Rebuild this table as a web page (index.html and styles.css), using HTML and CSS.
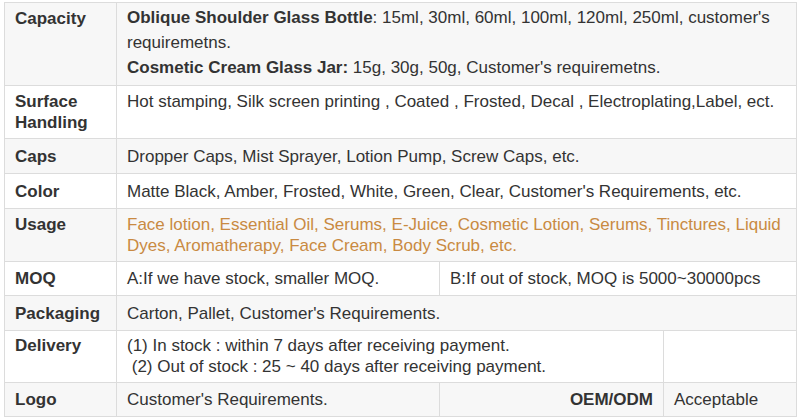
FILE: index.html
```html
<!DOCTYPE html>
<html>
<head>
<meta charset="utf-8">
<link rel="stylesheet" href="styles.css">
</head>
<body>
<table class="spec">
  <colgroup>
    <col class="c-label">
    <col class="c-a">
    <col class="c-b">
    <col class="c-c">
  </colgroup>
  <tr class="alt">
    <th class="label">Capacity</th>
    <td colspan="3" class="cap"><b>Oblique Shoulder Glass Bottle</b><span>: 15ml, 30ml, 60ml, 100ml, 120ml, 250ml, customer's requiremetns.</span><br><b>Cosmetic Cream Glass Jar:</b> <span>15g, 30g, 50g, Customer's requiremetns.</span></td>
  </tr>
  <tr>
    <th class="label">Surface Handling</th>
    <td colspan="3">Hot stamping, Silk screen printing , Coated , Frosted, Decal , Electroplating,Label, ect.</td>
  </tr>
  <tr class="alt single">
    <th class="label">Caps</th>
    <td colspan="3">Dropper Caps, Mist Sprayer, Lotion Pump, Screw Caps, etc.</td>
  </tr>
  <tr class="single">
    <th class="label">Color</th>
    <td colspan="3">Matte Black, Amber, Frosted, White, Green, Clear, Customer's Requirements, etc.</td>
  </tr>
  <tr class="alt">
    <th class="label">Usage</th>
    <td colspan="3" class="usage">Face lotion, Essential Oil, Serums, E-Juice, Cosmetic Lotion, Serums, Tinctures, Liquid Dyes, Aromatherapy, Face Cream, Body Scrub, etc.</td>
  </tr>
  <tr class="single short">
    <th class="label">MOQ</th>
    <td>A:If we have stock, smaller MOQ.</td>
    <td colspan="2">B:If out of stock, MOQ is 5000~30000pcs</td>
  </tr>
  <tr class="alt single">
    <th class="label">Packaging</th>
    <td colspan="3">Carton, Pallet, Customer's Requirements.</td>
  </tr>
  <tr class="delivery">
    <th class="label">Delivery</th>
    <td colspan="2">(1) In stock : within 7 days after receiving payment.<br>&nbsp;(2) Out of stock : 25 ~ 40 days after receiving payment.</td>
    <td></td>
  </tr>
  <tr class="alt single short">
    <th class="label">Logo</th>
    <td>Customer's Requirements.</td>
    <th class="oem">OEM/ODM</th>
    <td>Acceptable</td>
  </tr>
</table>
</body>
</html>
```

FILE: styles.css
```css
html, body {
  margin: 0;
  padding: 0;
  background: #ffffff;
}

.spec {
  margin: 2px 0 0 4px;
  width: 792px;
  table-layout: fixed;
  border-collapse: collapse;
  font-family: "Liberation Sans", Arial, sans-serif;
  font-size: 17px;
  line-height: 21px;
  color: #333333;
  border: 1px solid #dcdcdc;
}

.c-label { width: 112px; }
.c-a { width: 323px; }
.c-b { width: 224px; }
.c-c { width: 133px; }

.spec th,
.spec td {
  border: 1px solid #dcdcdc;
  padding: 5px 10px;
  text-align: left;
  vertical-align: top;
  font-weight: normal;
}

.spec th.label {
  font-weight: bold;
}

.spec tr.alt th,
.spec tr.alt td {
  background: #f7f7f7;
}

.spec tr.single th,
.spec tr.single td {
  height: 24px;
  vertical-align: middle;
}

.spec tr.single.short th,
.spec tr.single.short td {
  height: 23px;
}

.spec tr.delivery th,
.spec tr.delivery td {
  padding-top: 4px;
  padding-bottom: 5px;
}

.spec td.cap {
  line-height: 25px;
  padding-top: 2px;
  padding-bottom: 5px;
}

.spec td.usage {
  color: #c98a42;
}

.spec th.oem {
  font-weight: bold;
  text-align: right;
}
```
